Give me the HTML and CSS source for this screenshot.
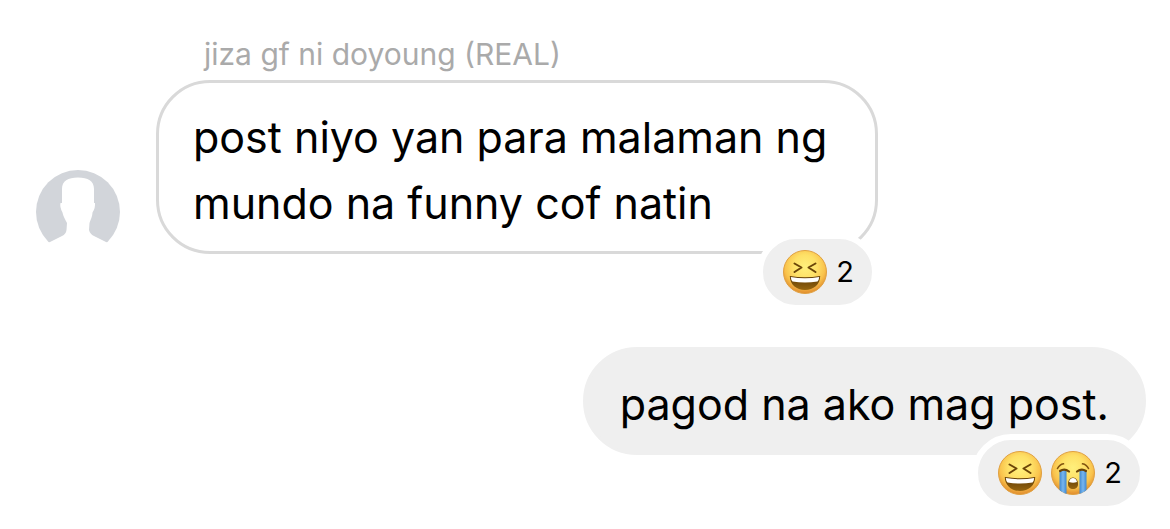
FILE: index.html
```html
<!DOCTYPE html>
<html lang="tl">
<head>
    <meta charset="UTF-8">
    <meta name="viewport" content="width=device-width, initial-scale=1.0">
    <title>Chat</title>
    <link rel="stylesheet" href="styles.css">
</head>
<body>

<!-- shared shapes for the reactions -->
<svg class="defs" width="0" height="0" aria-hidden="true">
    <defs>
        <radialGradient id="face" cx="50%" cy="38%" r="62%">
            <stop offset="0" stop-color="#fff07c"/>
            <stop offset="0.45" stop-color="#fee066"/>
            <stop offset="0.75" stop-color="#f9c24c"/>
            <stop offset="1" stop-color="#e08a2c"/>
        </radialGradient>
        <linearGradient id="mouth" x1="0" y1="0" x2="0" y2="1">
            <stop offset="0" stop-color="#5e3a05"/>
            <stop offset="1" stop-color="#96650f"/>
        </linearGradient>
        <linearGradient id="tear" x1="0" y1="0" x2="1" y2="0">
            <stop offset="0" stop-color="#4088d0"/>
            <stop offset="0.5" stop-color="#78b6ef"/>
            <stop offset="1" stop-color="#4088d0"/>
        </linearGradient>
        <clipPath id="face-clip"><circle cx="22" cy="22" r="22"/></clipPath>
        <symbol id="laugh" viewBox="0 0 44 44">
            <circle cx="22" cy="22" r="21.500" fill="url(#face)" stroke="#e0a040" stroke-width="1"/>
            <path d="M11.500 13.500 18.500 17.500 11.500 22M32.500 13.500 25.500 17.500 32.500 22" fill="none" stroke="#6b4508" stroke-width="2" stroke-linecap="round" stroke-linejoin="round"/>
            <path d="M6.800 26Q22 28.500 37.200 26C37.200 34.500 30.500 40 22 40S6.800 34.500 6.800 26Z" fill="url(#mouth)"/>
            <path d="M7.800 27Q22 29.500 36.200 27Q36 30 34.500 31.500Q22 33.500 9.500 31.500Q8 30 7.800 27Z" fill="#fff"/>
        </symbol>
        <symbol id="cry" viewBox="0 0 44 44">
            <circle cx="22" cy="22" r="21.500" fill="url(#face)" stroke="#e0a040" stroke-width="1"/>
            <g clip-path="url(#face-clip)">
                <path d="M8.500 19.500Q12 18 15.500 20V44H8.500Z" fill="url(#tear)"/>
                <path d="M28.500 20Q32 18 35.500 19.500V44H28.500Z" fill="url(#tear)"/>
            </g>
            <path d="M6.500 17.500Q8.500 13.500 12.500 12.800M37.500 17.500Q35.500 13.500 31.500 12.800" fill="none" stroke="#80530f" stroke-width="1.600" stroke-linecap="round"/>
            <path d="M9 20Q13.500 17 18 20.500M26 20.500Q30.500 17 35 20" fill="none" stroke="#6b4508" stroke-width="2.200" stroke-linecap="round"/>
            <path d="M22 26.500C25 26.500 27 29.500 27 33S25 38 22 38 17 36.500 17 33 19 26.500 22 26.500Z" fill="url(#mouth)"/>
            <path d="M22 27C24 27 25.500 28.500 26 31Q22 32.500 18 31C18.500 28.500 20 27 22 27Z" fill="#fff"/>
        </symbol>
    </defs>
</svg>

<main class="chat">
    <div class="message received">
        <svg class="avatar" viewBox="0 0 84 84" role="img" aria-label="jiza">
            <circle cx="42" cy="42" r="42" fill="#d2d5da"/>
            <path d="M14 72 26 66Q30 64 30.500 60L31 53C29 49 27 46 26.500 42.500Q23.500 37 24.500 33H26V19C26 11 32 7.500 42 7.500S58 11 58 19V33H59Q59.500 38 56.500 42.500C56.500 46 54.500 50 53.500 53L53 60Q54 64 58 66L70 72 84 78V84H0V78Z" fill="#fff"/>
        </svg>
        <div class="content">
            <div class="sender">jiza gf ni doyoung (REAL)</div>
            <div class="bubble">
                post niyo yan para malaman ng mundo na funny cof natin
                <button class="reactions" type="button">
                    <svg class="emoji" aria-hidden="true"><use href="#laugh"/></svg>
                    <span>2</span>
                </button>
            </div>
        </div>
    </div>

    <div class="message sent">
        <div class="bubble">
            pagod na ako mag post.
            <button class="reactions" type="button">
                <svg class="emoji" aria-hidden="true"><use href="#laugh"/></svg>
                <svg class="emoji" aria-hidden="true"><use href="#cry"/></svg>
                <span>2</span>
            </button>
        </div>
    </div>
</main>

</body>
</html>
```
FILE: styles.css
```css
* {
    box-sizing: border-box;
}

body {
    margin: 0;
    background-color: #fff;
    color: #000;
    font-family: Inter, "Liberation Sans", sans-serif;
}

.defs {
    position: absolute;
}

.chat {
    display: flex;
    flex-direction: column;
    gap: 93px;
    padding: 34px 24px 74px 36px;
}

.message {
    display: flex;
    align-items: flex-end;
    gap: 36px;
}

.sent {
    justify-content: flex-end;
}

.avatar {
    flex: none;
    width: 84px;
    height: 84px;
}

.sender {
    padding: 0 48px 6px;
    color: #aaa;
    font-size: 30px;
    line-height: 40px;
}

.bubble {
    position: relative;
    max-width: 722px;
    padding: 21px 34px 15px;
    border: 3px solid #d9d9d9;
    border-radius: 54px;
    font-size: 43px;
    line-height: 66px;
}

.sent .bubble {
    border-color: #efefef;
    background-color: #efefef;
}

/* sits over the bottom right corner of its bubble */
.reactions {
    position: absolute;
    right: -3px;
    bottom: -60px;
    display: flex;
    align-items: center;
    gap: 9px;
    height: 78px;
    padding: 0 18px 0 20px;
    border: 6px solid #fff;
    border-radius: 39px;
    background-color: #efefef;
    color: #000;
    font-family: inherit;
    font-size: 29px;
    line-height: 36px;
    cursor: pointer;
}

.emoji {
    width: 44px;
    height: 44px;
}
```
